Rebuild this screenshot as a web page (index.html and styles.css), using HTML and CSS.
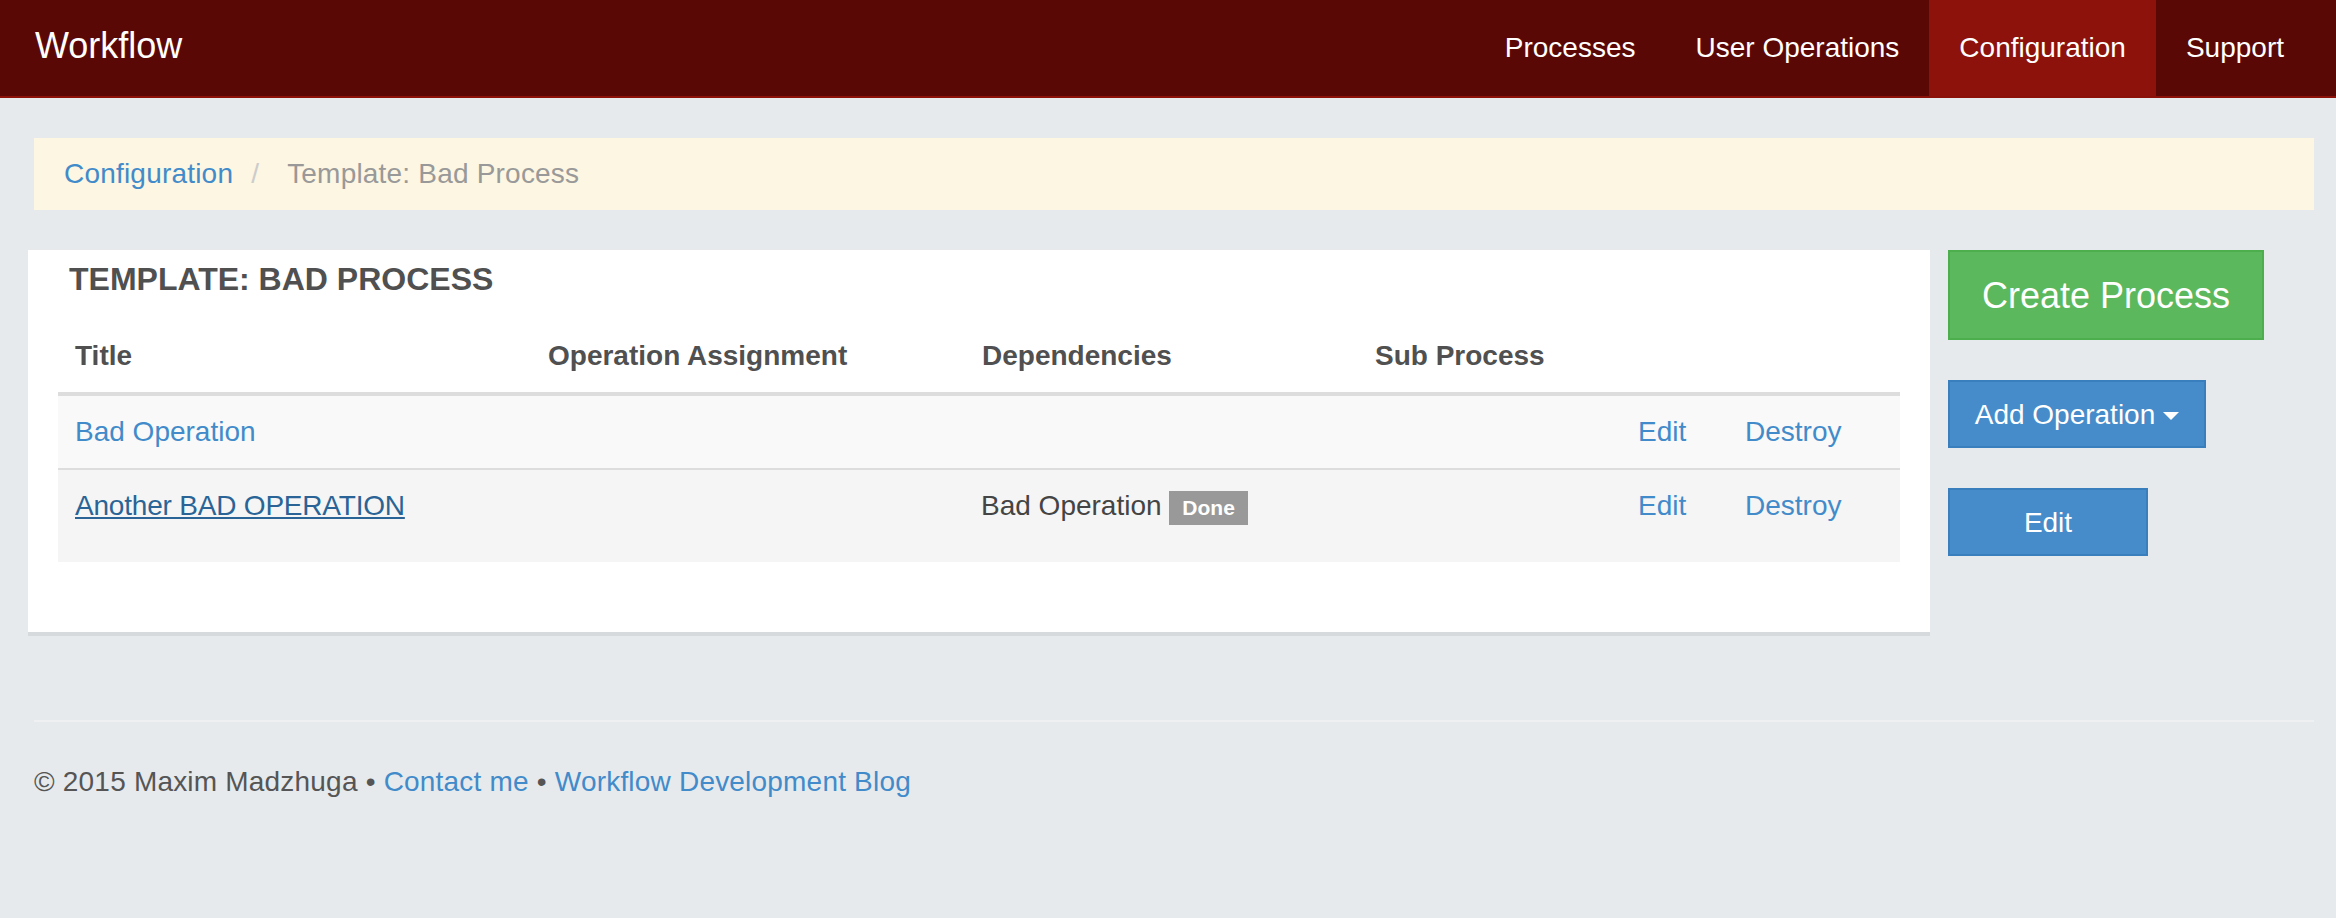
FILE: index.html
```html
<!DOCTYPE html>
<html lang="en">
<head>
<meta charset="utf-8">
<title>Workflow</title>
<link rel="stylesheet" href="styles.css">
</head>
<body>
<header class="navbar">
  <a class="brand" href="#">Workflow</a>
  <ul class="nav">
    <li><a href="#">Processes</a></li>
    <li><a href="#">User Operations</a></li>
    <li class="active"><a href="#">Configuration</a></li>
    <li><a href="#">Support</a></li>
  </ul>
</header>

<main class="container">
  <ol class="breadcrumb">
    <li><a href="#">Configuration</a></li>
    <li class="sep">/</li>
    <li class="current">Template: Bad Process</li>
  </ol>

  <div class="row">
    <section class="panel">
      <h3 class="panel-title">TEMPLATE: BAD PROCESS</h3>
      <table class="table">
        <colgroup>
          <col class="c1"><col class="c2"><col class="c3"><col class="c4"><col class="c5"><col class="c6">
        </colgroup>
        <thead>
          <tr>
            <th>Title</th>
            <th>Operation Assignment</th>
            <th>Dependencies</th>
            <th>Sub Process</th>
            <th></th>
            <th></th>
          </tr>
        </thead>
        <tbody>
          <tr class="odd">
            <td><a href="#">Bad Operation</a></td>
            <td></td>
            <td></td>
            <td></td>
            <td><a href="#">Edit</a></td>
            <td><a href="#">Destroy</a></td>
          </tr>
          <tr class="hover tall">
            <td><a class="hovered" href="#">Another BAD OPERATION</a></td>
            <td></td>
            <td class="dep">Bad Operation <span class="label">Done</span></td>
            <td></td>
            <td><a href="#">Edit</a></td>
            <td><a href="#">Destroy</a></td>
          </tr>
        </tbody>
      </table>
    </section>

    <aside class="actions">
      <a class="btn btn-lg btn-success btn-create" href="#">Create Process</a>
      <a class="btn btn-primary btn-add" href="#">Add Operation <span class="caret"></span></a>
      <a class="btn btn-primary btn-edit" href="#">Edit</a>
    </aside>
  </div>

  <footer class="footer">
    <hr class="rule">
    <p class="credits">© 2015 Maxim Madzhuga • <a href="#">Contact me</a> • <a href="#">Workflow Development Blog</a></p>
  </footer>
</main>
</body>
</html>
```

FILE: styles.css
```css
* { box-sizing: border-box; }

html, body {
  margin: 0;
  padding: 0;
}

body {
  background: #e6eaed;
  font-family: "Liberation Sans", Arial, Helvetica, sans-serif;
  font-size: 28px;
  line-height: 40px;
  color: #555;
}

a { color: #428bca; text-decoration: none; }

/* Navbar */
.navbar {
  display: flex;
  justify-content: space-between;
  align-items: stretch;
  height: 98px;
  background: #5a0805;
  border-bottom: 2px solid #8c1209;
}

.brand {
  display: flex;
  align-items: center;
  padding: 0 0 4px 35px;
  font-size: 36px;
  line-height: 40px;
  color: #fff;
}

.nav {
  display: flex;
  margin: 0 22px 0 0;
  padding: 0;
  list-style: none;
}

.nav li {
  display: flex;
}

.nav a {
  display: flex;
  align-items: center;
  padding: 0 30px;
  color: #fff;
  font-size: 28px;
  line-height: 40px;
}

.nav .active a {
  background: #8c120b;
}

/* Container */
.container {
  padding: 0 22px 0 28px;
}

.breadcrumb {
  display: flex;
  align-items: center;
  height: 72px;
  margin: 40px 0 40px 6px;
  padding: 0 30px;
  list-style: none;
  background: #fcf6e2;
  letter-spacing: 0.2px;
}

.breadcrumb .sep {
  color: #ccc;
  margin: 0 28px 0 18px;
}

.breadcrumb .current {
  color: #999;
}

/* Row */
.row {
  display: flex;
  align-items: flex-start;
  gap: 18px;
}

.panel {
  width: 1902px;
  flex: none;
  background: #fff;
  padding: 0 30px 70px;
  box-shadow: 0 4px 0 #d6dadd;
}

.panel-title {
  margin: 0 0 21px 11px;
  padding-top: 9px;
  font-size: 32px;
  line-height: 40px;
  font-weight: bold;
  color: #505050;
}

.table {
  width: 100%;
  border-collapse: collapse;
  table-layout: fixed;
}

.c1 { width: 473px; }
.c2 { width: 434px; }
.c3 { width: 393px; }
.c4 { width: 264px; }
.c5 { width: 107px; }
.c6 { width: 171px; }

.table th {
  text-align: left;
  font-weight: bold;
  color: #505050;
  padding: 16px 17px;
  line-height: 40px;
  border-bottom: 4px solid #ddd;
}

.table td {
  padding: 16px 17px 16px 16px;
  line-height: 40px;
  vertical-align: top;
  white-space: nowrap;
}

.table td:first-child { padding-left: 17px; }

.table tr.odd td { background: #f9f9f9; }

.table tr.hover td {
  background: #f5f5f5;
  border-top: 2px solid #ddd;
}

.table tr.tall td { padding-bottom: 36px; }

.table .hovered {
  color: #2a6496;
  text-decoration: underline;
  letter-spacing: -0.2px;
}

.dep { color: #444; }

.label {
  display: inline-block;
  padding: 0 13px;
  line-height: 34px;
  font-size: 21px;
  font-weight: bold;
  color: #fff;
  background: #999;
}

/* Actions */
.actions {
  display: flex;
  flex-direction: column;
  align-items: flex-start;
  gap: 40px;
}

.btn {
  display: inline-flex;
  align-items: center;
  justify-content: center;
  color: #fff;
  border: 2px solid transparent;
}

.btn-success {
  background: #5cb85c;
  border-color: #4cae4c;
}

.btn-primary {
  background: #468cca;
  border-color: #3a7fbd;
}

.btn-create {
  width: 316px;
  height: 90px;
  font-size: 36px;
  padding-top: 2px;
}

.btn-add {
  width: 258px;
  height: 68px;
  padding-top: 1px;
}

.btn-edit {
  width: 200px;
  height: 68px;
  padding-top: 1px;
}

.caret {
  display: inline-block;
  width: 0;
  height: 0;
  margin-left: 8px;
  margin-top: 2px;
  border-top: 8px solid #fff;
  border-left: 8px solid transparent;
  border-right: 8px solid transparent;
}

/* Footer */
.footer {
  margin: 88px 0 0 6px;
}

.rule {
  margin: 0;
  border: 0;
  height: 2px;
  background: #eef0f2;
}

.credits {
  margin: 40px 0 0;
  color: #555;
  letter-spacing: 0.2px;
}
```
